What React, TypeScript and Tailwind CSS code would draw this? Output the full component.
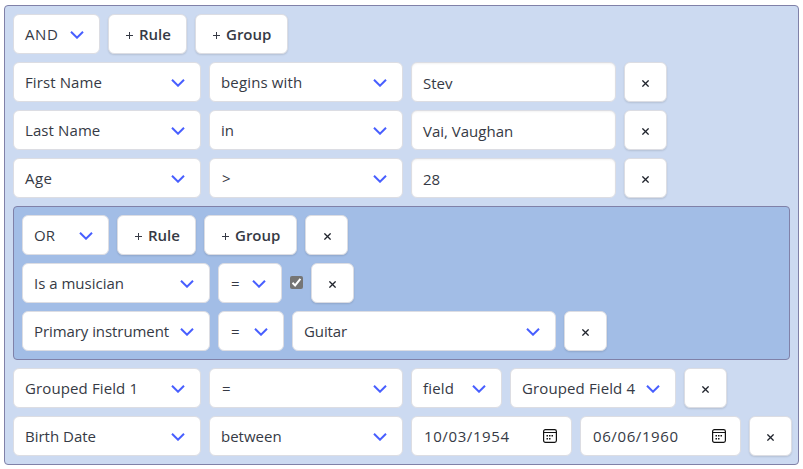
import type { ReactNode } from 'react';

const control =
  'flex h-10 shrink-0 items-center rounded-md border border-[#dcdde3] bg-white px-[11px] text-[15px] leading-6 text-[#363a45] whitespace-nowrap';

function Chevron() {
  return (
    <svg width="14" height="9" viewBox="0 0 14 9" className="shrink-0">
      <path d="M1 1.7 7 7.7 13 1.7" fill="none" stroke="#485fff" strokeWidth="2" />
    </svg>
  );
}

function Select({ width, label, text = '' }: { width: string; label: string; text?: string }) {
  return (
    <div className={`${control} ${width} justify-between pr-[15px]`}>
      <span className={text}>{label}</span>
      <Chevron />
    </div>
  );
}

function Input({ label, text = '' }: { label: string; text?: string }) {
  return (
    <div className={`${control} w-[205px] pt-px shadow-[inset_0_1px_2px_rgba(10,10,10,0.05)]`}>
      <span className={text}>{label}</span>
    </div>
  );
}

function AddButton({ width, label }: { width: string; label: string }) {
  return (
    <button className={`${control} ${width} pl-4 shadow-[0_1px_2px_rgba(10,10,10,0.12)]`}>
      <svg width="9" height="9" viewBox="0 0 9 9" className="relative top-px mr-[5px] shrink-0">
        <path d="M1 4.5H8M4.5 1V8" stroke="#363a45" strokeWidth="1" />
      </svg>
      <span className="font-semibold">{label}</span>
    </button>
  );
}

function Remove({ pad = '' }: { pad?: string }) {
  return (
    <button className={`${control} w-[43px] justify-center shadow-[0_1px_2px_rgba(10,10,10,0.12)]`}>
      <svg width="7" height="7" viewBox="0 0 7 7" className={`relative top-px shrink-0 ${pad}`}>
        <path d="M.4 .4 6.6 6.6M6.6 .4 .4 6.6" stroke="#20242d" strokeWidth="1.3" />
      </svg>
    </button>
  );
}

function DateInput({ value }: { value: string }) {
  return (
    <div className={`${control} w-[161px] justify-between pr-[14px] pl-[12px]`}>
      <span className="tracking-[0.6px]">{value}</span>
      <svg width="14" height="14" viewBox="0 0 14 14" className="shrink-0">
        <rect x=".6" y=".6" width="12.8" height="12.8" rx="1.8" fill="none" stroke="#111" strokeWidth="1.2" />
        <path d="M1 3.5H13" stroke="#111" />
        <path
          d="M6 6h1.5v1.5H6zM8.5 6H10v1.5H8.5zM3.5 9H5v1.5H3.5zM3.5 6H5v1.5H3.5zM6 9h1.5v1.5H6z"
          fill="#111"
        />
      </svg>
    </div>
  );
}

function Row({ children }: { children: ReactNode }) {
  return <div className="flex h-10 items-center gap-2">{children}</div>;
}

export default function App() {
  return (
    <main className="h-[469px] w-[803px] bg-white pt-[5px] pl-1 font-['Open_Sans','Noto_Sans',sans-serif]">
      <section className="flex h-[460px] w-[795px] flex-col gap-2 rounded border border-[#8081a8] bg-[#ccdaf1] p-2">
        <Row>
          <Select width="w-[87px]" label="AND" text="tracking-[0.6px]" />
          <AddButton width="w-[79px]" label="Rule" />
          <AddButton width="w-[93px]" label="Group" />
        </Row>
        <Row>
          <Select width="w-[188px]" label="First Name" text="tracking-[0.1px]" />
          <Select width="w-[194px]" label="begins with" text="tracking-[0.15px]" />
          <Input label="Stev" />
          <Remove />
        </Row>
        <Row>
          <Select width="w-[188px]" label="Last Name" text="tracking-[0.1px]" />
          <Select width="w-[194px]" label="in" />
          <Input label="Vai, Vaughan" />
          <Remove />
        </Row>
        <Row>
          <Select width="w-[188px]" label="Age" text="tracking-[0.4px]" />
          <Select width="w-[194px]" label=">" text="pl-px" />
          <Input label="28" />
          <Remove />
        </Row>
        <section className="flex w-[777px] flex-col gap-2 rounded border border-[#8081a8] bg-[#a2bde6] p-2">
          <Row>
            <Select width="w-[87px]" label="OR" />
            <AddButton width="w-[79px]" label="Rule" />
            <AddButton width="w-[93px]" label="Group" />
            <Remove pad="left-px" />
          </Row>
          <Row>
            <Select width="w-[188px]" label="Is a musician" />
            <Select width="w-[64px]" label="=" text="pl-px" />
            <svg width="13" height="13" viewBox="0 0 13 13" className="relative -top-px shrink-0">
              <rect width="13" height="13" rx="2" fill="#757575" />
              <path d="M2.5 6.8 5.1 9.4 10.4 2.9" fill="none" stroke="white" strokeWidth="2" />
            </svg>
            <Remove />
          </Row>
          <Row>
            <Select width="w-[188px]" label="Primary instrument" text="tracking-[-0.07px]" />
            <Select width="w-[66px]" label="=" text="pl-px" />
            <Select width="w-[264px]" label="Guitar" text="tracking-[-0.1px]" />
            <Remove />
          </Row>
        </section>
        <Row>
          <Select width="w-[188px]" label="Grouped Field 1" text="tracking-[0.12px]" />
          <Select width="w-[194px]" label="=" text="pl-px" />
          <Select width="w-[91px]" label="field" text="tracking-[0.2px]" />
          <Select width="w-[166px]" label="Grouped Field 4" text="tracking-[0.12px]" />
          <Remove />
        </Row>
        <Row>
          <Select width="w-[188px]" label="Birth Date" />
          <Select width="w-[194px]" label="between" />
          <DateInput value="10/03/1954" />
          <DateInput value="06/06/1960" />
          <Remove />
        </Row>
      </section>
    </main>
  );
}
